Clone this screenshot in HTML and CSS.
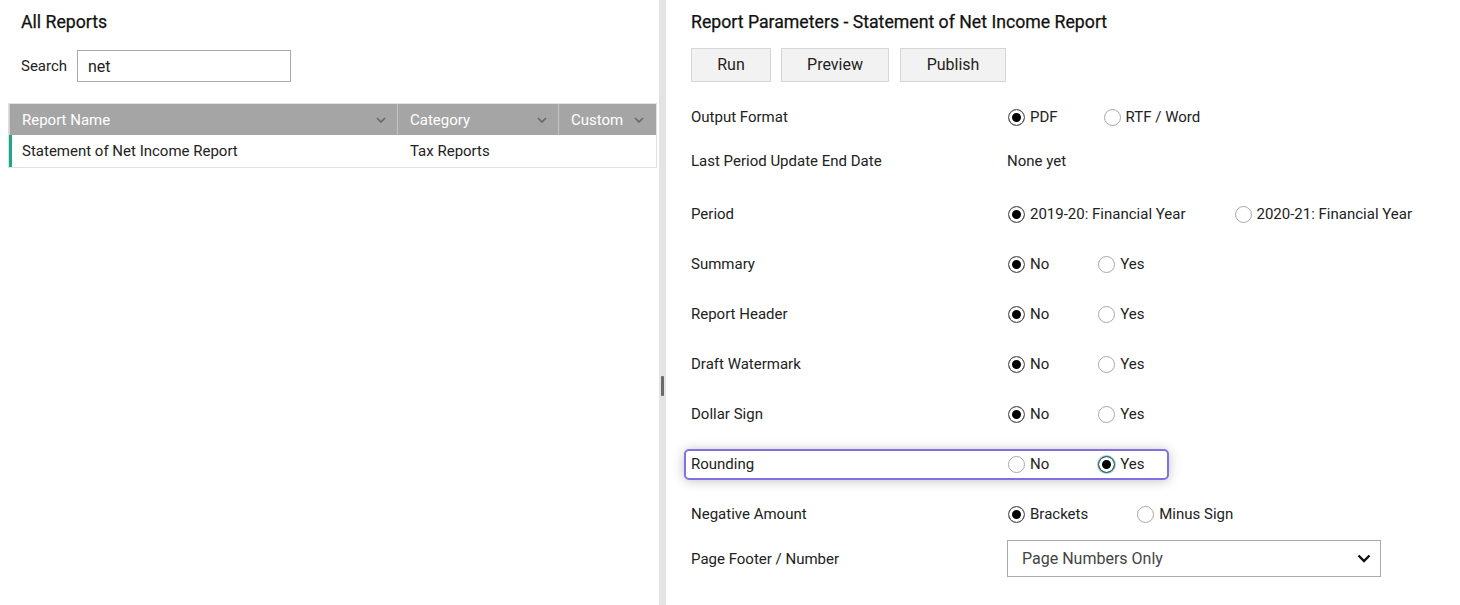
FILE: index.html
```html
<!DOCTYPE html>
<html lang="en">
<head>
    <meta charset="UTF-8">
    <title>Reports</title>
    <link rel="stylesheet" href="styles.css">
</head>
<body>
    <div class="left">
        <h2 class="title">All Reports</h2>
        <div class="search">
            <label for="search">Search</label>
            <input type="text" id="search" value="net">
        </div>
        <div class="grid">
            <div class="grid-head">
                <div class="col col-name">Report Name <svg class="chev" viewBox="0 0 10 6"><path d="M1 1l4 4 4-4" fill="none" stroke="#666" stroke-width="1.6"/></svg></div>
                <div class="col col-cat">Category <svg class="chev" viewBox="0 0 10 6"><path d="M1 1l4 4 4-4" fill="none" stroke="#666" stroke-width="1.6"/></svg></div>
                <div class="col col-custom">Custom <svg class="chev" viewBox="0 0 10 6"><path d="M1 1l4 4 4-4" fill="none" stroke="#666" stroke-width="1.6"/></svg></div>
            </div>
            <div class="grid-row selected">
                <div class="col col-name">Statement of Net Income Report</div>
                <div class="col col-cat">Tax Reports</div>
                <div class="col col-custom"></div>
            </div>
        </div>
    </div>

    <div class="splitter"><div class="handle"></div></div>

    <div class="right">
        <h2 class="title">Report Parameters - Statement of Net Income Report</h2>
        <div class="buttons">
            <button class="btn btn-run">Run</button>
            <button class="btn btn-preview">Preview</button>
            <button class="btn btn-publish">Publish</button>
        </div>

        <div class="params">
            <div class="param h44">
                <div class="param-label">Output Format</div>
                <div class="param-value">
                    <label class="opt opt-pdf"><input type="radio" name="fmt" checked> PDF</label>
                    <label class="opt"><input type="radio" name="fmt"> RTF / Word</label>
                </div>
            </div>
            <div class="param h44 gap-after">
                <div class="param-label">Last Period Update End Date</div>
                <div class="param-value">None yet</div>
            </div>
            <div class="param">
                <div class="param-label">Period</div>
                <div class="param-value">
                    <label class="opt"><input type="radio" name="period" checked> 2019-20: Financial Year</label>
                    <label class="opt"><input type="radio" name="period"> 2020-21: Financial Year</label>
                </div>
            </div>
            <div class="param">
                <div class="param-label">Summary</div>
                <div class="param-value">
                    <label class="opt"><input type="radio" name="summary" checked> No</label>
                    <label class="opt"><input type="radio" name="summary"> Yes</label>
                </div>
            </div>
            <div class="param">
                <div class="param-label">Report Header</div>
                <div class="param-value">
                    <label class="opt"><input type="radio" name="header" checked> No</label>
                    <label class="opt"><input type="radio" name="header"> Yes</label>
                </div>
            </div>
            <div class="param">
                <div class="param-label">Draft Watermark</div>
                <div class="param-value">
                    <label class="opt"><input type="radio" name="draft" checked> No</label>
                    <label class="opt"><input type="radio" name="draft"> Yes</label>
                </div>
            </div>
            <div class="param">
                <div class="param-label">Dollar Sign</div>
                <div class="param-value">
                    <label class="opt"><input type="radio" name="dollar" checked> No</label>
                    <label class="opt"><input type="radio" name="dollar"> Yes</label>
                </div>
            </div>
            <div class="param">
                <div class="param-focus">
                    <div class="param-label">Rounding</div>
                    <div class="param-value">
                        <label class="opt"><input type="radio" name="rounding"> No</label>
                        <label class="opt"><input type="radio" name="rounding" class="focused" checked> Yes</label>
                    </div>
                </div>
            </div>
            <div class="param">
                <div class="param-label">Negative Amount</div>
                <div class="param-value">
                    <label class="opt"><input type="radio" name="negative" checked> Brackets</label>
                    <label class="opt"><input type="radio" name="negative"> Minus Sign</label>
                </div>
            </div>
            <div class="param h39">
                <div class="param-label">Page Footer / Number</div>
                <div class="param-value">
                    <div class="select">
                        <span>Page Numbers Only</span>
                        <svg class="select-arrow" viewBox="0 0 14 9"><path d="M1.5 1.5l5.5 5.5 5.5-5.5" fill="none" stroke="#111" stroke-width="2.4"/></svg>
                    </div>
                </div>
            </div>
        </div>
    </div>
</body>
</html>
```

FILE: styles.css
```css
body {
    margin: 0;
    font-family: Roboto, 'Liberation Sans', Arial, sans-serif;
    color: #222;
    background: #fff;
    display: flex;
    height: 605px;
    overflow: hidden;
}
.title {
    margin: 0;
    padding-top: 11px;
    height: 21px;
    line-height: 22px;
    font-size: 17.7px;
    font-weight: 400;
    color: #111;
    -webkit-text-stroke: 0.25px #111;
}

/* left side */
.left {
    width: 659px;
    box-sizing: border-box;
    padding: 0 2px 0 8px;
}
.left .title {
    padding-left: 13px;
}
.search {
    display: flex;
    align-items: center;
    margin-top: 18px;
    padding-left: 13px;
    font-size: 15px;
}
.search label {
    width: 56px;
}
.search input {
    width: 214px;
    height: 32px;
    box-sizing: border-box;
    border: 1px solid #aaa;
    padding: 0 10px;
    font-family: inherit;
    font-size: 16px;
    color: #222;
    outline: none;
}
.grid {
    margin-top: 21px;
    border: 1px solid #e0e0e0;
    font-size: 15px;
}
.grid-head {
    display: flex;
    height: 31px;
    background: #a5a5a5;
    color: #fff;
    border-left: 1px solid #cfcfcf;
}
.grid-head .col {
    border-right: 1px solid #c4c4c4;
}
.grid-head .col:last-child {
    border-right: none;
}
.col {
    display: flex;
    align-items: center;
    justify-content: space-between;
    box-sizing: border-box;
    padding: 0 11px 0 12px;
}
.col-name { width: 388px; }
.col-cat { width: 161px; }
.col-custom { width: 96px; }
.chev {
    width: 10px;
    height: 6px;
}
.grid-row {
    display: flex;
    height: 32px;
    background: #fff;
}
.grid-row .col {
    justify-content: flex-start;
}
.grid-row.selected {
    border-left: 3px solid #1aaa89;
}
.grid-row.selected .col-name {
    width: 386px;
    padding-left: 10px;
}

/* splitter */
.splitter {
    width: 7px;
    background: #e3e3e3;
    padding-top: 376px;
    box-sizing: border-box;
}
.handle {
    width: 3px;
    height: 20px;
    margin-left: 2px;
    background: #6e6969;
    border-radius: 1px;
}

/* right side */
.right {
    flex: 1;
    padding-left: 25px;
}
.buttons {
    display: flex;
    gap: 10px;
    margin-top: 16px;
}
.btn {
    height: 34px;
    background: #f2f2f2;
    border: 1px solid #d6d6d6;
    font-family: inherit;
    font-size: 16px;
    line-height: 30px;
    color: #222;
    padding: 0 0 1px;
}
.btn-run { width: 80px; }
.btn-preview { width: 108px; }
.btn-publish { width: 106px; margin-left: 1px; }

.params {
    margin-top: 13px;
    font-size: 15px;
}
.param {
    display: flex;
    align-items: center;
    height: 50px;
}
.param.h44 { height: 44px; }
.param.h39 { height: 39px; }
.param.gap-after { margin-bottom: 6px; }
.param-label {
    width: 316px;
    flex-shrink: 0;
}
.param-value {
    display: flex;
    align-items: center;
}
.param-focus {
    display: flex;
    align-items: center;
    height: 27px;
    margin-left: -7px;
    padding: 0 22px 0 5px;
    border: 2px solid #8270e2;
    border-radius: 5px;
    box-shadow: 0 1px 12px rgba(0, 0, 0, 0.24);
}
.param-focus .opt:last-child {
    margin-right: 0;
}
.opt {
    display: flex;
    align-items: center;
    margin-right: 48px;
}
.opt-pdf {
    margin-right: 45px;
}
.opt input {
    appearance: none;
    -webkit-appearance: none;
    width: 17px;
    height: 17px;
    margin: 0 5px 0 1px;
    border: 1px solid #a8a8a8;
    border-radius: 50%;
    background: #fff;
    box-sizing: border-box;
}
.opt input:checked {
    border-color: #666;
    background: #000;
    box-shadow: inset 0 0 0 3px #fff;
}
.opt input.focused {
    border-color: #2f6f80;
    box-shadow: inset 0 0 0 3px #fff, 0 0 0 1px #a9ccd6;
}
.select {
    display: flex;
    align-items: center;
    justify-content: space-between;
    width: 374px;
    height: 37px;
    box-sizing: border-box;
    border: 1px solid #aaa;
    padding: 0 9px 0 14px;
    font-size: 16px;
    color: #444;
}
.select-arrow {
    width: 14px;
    height: 9px;
}
```
